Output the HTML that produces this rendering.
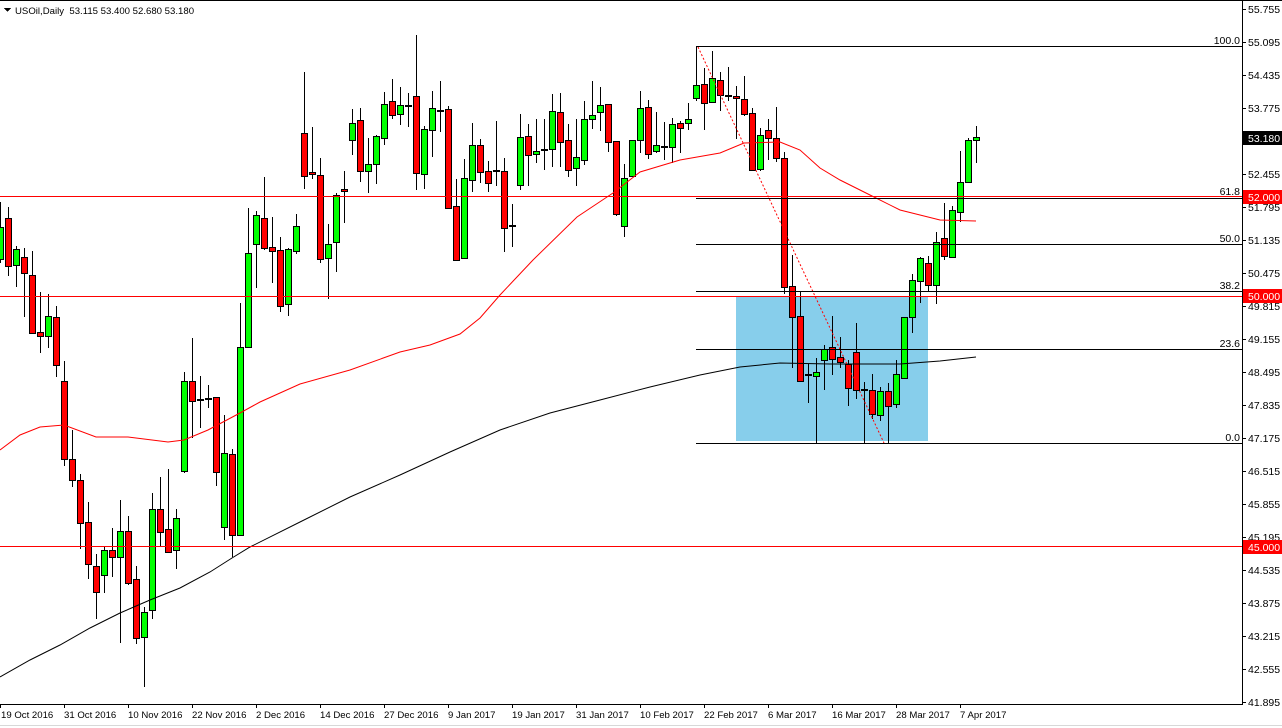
<!DOCTYPE html>
<html><head><meta charset="utf-8"><style>
html,body{margin:0;padding:0;background:#fff;}
svg{display:block;font-family:"Liberation Sans",Tahoma,sans-serif;font-size:10.5px;}
.g{fill:#00ff00;stroke:#000;stroke-width:1}
.r{fill:#ff0000;stroke:#000;stroke-width:1}
.ax text{fill:#000}
.sm{font-size:9.6px}
</style></head><body>
<svg width="1282" height="728" viewBox="0 0 1282 728" shape-rendering="crispEdges">
<rect x="0" y="0" width="1282" height="728" fill="#fff"/>
<line x1="0" y1="0.5" x2="1282" y2="0.5" stroke="#000"/>
<rect x="736" y="296" width="192" height="145" fill="#87ceeb"/>
<path fill="none" stroke="#000" d="M0.5 202V263M8.5 207V276M16.5 246V287M24.5 248V317M32.5 251V334M40.5 292V353M48.5 294V348M56.5 306V377M64.5 361V466M72.5 430V487M80.5 474V549M88.5 502V579M96.5 554V619M104.5 547V593M112.5 528V577M120.5 500V643M128.5 516V585M136.5 566V644M144.5 607V687M152.5 493V619M160.5 477V546M168.5 469V553M176.5 509V569M184.5 372V473M192.5 338V438M200.5 376V428M208.5 385V408M216.5 397V486M224.5 415V540M232.5 449V557M240.5 303V535M248.5 208V347M256.5 211V288M264.5 177V250M272.5 217V283M280.5 237V312M288.5 248V316M296.5 214V254M304.5 72V189M312.5 127V179M320.5 158V263M328.5 224V299M336.5 193V272M344.5 171V223M352.5 109V155M360.5 108V182M368.5 138V193M376.5 135V184M384.5 92V145M392.5 79V119M400.5 87V125M408.5 93V127M416.5 35V190M424.5 126V189M432.5 91V157M440.5 81V132M448.5 106V209M456.5 179V261M464.5 159V259M472.5 123V192M480.5 139V183M488.5 161V192M496.5 121V186M504.5 158V252M512.5 204V247M520.5 114V190M528.5 124V186M536.5 119V163M544.5 119V170M552.5 94V167M560.5 93V167M568.5 124V177M576.5 119V186M584.5 101V165M592.5 81V129M600.5 87V131M608.5 104V152M616.5 141V216M624.5 164V237M632.5 140V176M640.5 91V153M648.5 100V159M656.5 112V153M664.5 122V160M672.5 118V163M680.5 121V153M688.5 103V130M696.5 47V101M704.5 68V130M712.5 51V103M720.5 72V111M728.5 67V101M736.5 86V139M744.5 76V116M752.5 108V170M760.5 128V171M768.5 119V160M776.5 107V162M784.5 152V294M792.5 255V368M800.5 292V382M808.5 364V403M816.5 358V443M824.5 345V390M832.5 316V375M840.5 337V368M848.5 360V406M856.5 323V399M864.5 382V443M872.5 374V419M880.5 387V421M888.5 383V443M896.5 360V408M904.5 317V378M912.5 274V333M920.5 257V303M928.5 256V291M936.5 232V304M944.5 203V260M952.5 206V258M960.5 151V222M968.5 138V183M976.5 126V163"/>
<g fill="#000">
<rect x="197" y="399" width="7" height="2"/><rect x="205" y="398" width="7" height="2"/>
<rect x="405" y="105" width="7" height="2"/><rect x="437" y="110" width="7" height="2"/>
<rect x="493" y="170" width="7" height="2"/><rect x="509" y="225" width="7" height="2"/>
<rect x="541" y="149" width="7" height="2"/><rect x="661" y="146" width="7" height="2"/>
<rect x="725" y="95" width="7" height="2"/><rect x="805" y="374" width="7" height="2"/>
<rect x="861" y="389" width="7" height="2"/>
</g>
<g>
<rect class="g" x="-2.5" y="227.5" width="6" height="32"/>
<rect class="r" x="5.5" y="218.5" width="6" height="48"/>
<rect class="g" x="13.5" y="249.5" width="6" height="16"/>
<rect class="r" x="21.5" y="257.5" width="6" height="16"/>
<rect class="r" x="29.5" y="275.5" width="6" height="58"/>
<rect class="r" x="37.5" y="332.5" width="6" height="4"/>
<rect class="g" x="45.5" y="316.5" width="6" height="20"/>
<rect class="r" x="53.5" y="317.5" width="6" height="48"/>
<rect class="r" x="61.5" y="381.5" width="6" height="78"/>
<rect class="r" x="69.5" y="459.5" width="6" height="21"/>
<rect class="r" x="77.5" y="480.5" width="6" height="43"/>
<rect class="r" x="85.5" y="522.5" width="6" height="42"/>
<rect class="r" x="93.5" y="566.5" width="6" height="26"/>
<rect class="g" x="101.5" y="550.5" width="6" height="25"/>
<rect class="r" x="109.5" y="550.5" width="6" height="7"/>
<rect class="g" x="117.5" y="531.5" width="6" height="26"/>
<rect class="r" x="125.5" y="531.5" width="6" height="52"/>
<rect class="r" x="133.5" y="579.5" width="6" height="59"/>
<rect class="g" x="141.5" y="612.5" width="6" height="25"/>
<rect class="g" x="149.5" y="509.5" width="6" height="101"/>
<rect class="r" x="157.5" y="509.5" width="6" height="23"/>
<rect class="r" x="165.5" y="529.5" width="6" height="23"/>
<rect class="g" x="173.5" y="518.5" width="6" height="32"/>
<rect class="g" x="181.5" y="381.5" width="6" height="90"/>
<rect class="r" x="189.5" y="381.5" width="6" height="20"/>
<rect class="r" x="213.5" y="397.5" width="6" height="75"/>
<rect class="g" x="221.5" y="453.5" width="6" height="74"/>
<rect class="r" x="229.5" y="454.5" width="6" height="81"/>
<rect class="g" x="237.5" y="347.5" width="6" height="188"/>
<rect class="g" x="245.5" y="253.5" width="6" height="94"/>
<rect class="g" x="253.5" y="215.5" width="6" height="29"/>
<rect class="r" x="261.5" y="218.5" width="6" height="30"/>
<rect class="r" x="269.5" y="247.5" width="6" height="4"/>
<rect class="r" x="277.5" y="250.5" width="6" height="56"/>
<rect class="g" x="285.5" y="249.5" width="6" height="55"/>
<rect class="g" x="293.5" y="226.5" width="6" height="25"/>
<rect class="r" x="301.5" y="133.5" width="6" height="43"/>
<rect class="r" x="309.5" y="172.5" width="6" height="2"/>
<rect class="r" x="317.5" y="175.5" width="6" height="84"/>
<rect class="g" x="325.5" y="244.5" width="6" height="14"/>
<rect class="g" x="333.5" y="195.5" width="6" height="47"/>
<rect class="r" x="341.5" y="189.5" width="6" height="2"/>
<rect class="g" x="349.5" y="123.5" width="6" height="17"/>
<rect class="r" x="357.5" y="120.5" width="6" height="51"/>
<rect class="g" x="365.5" y="164.5" width="6" height="7"/>
<rect class="g" x="373.5" y="136.5" width="6" height="28"/>
<rect class="g" x="381.5" y="104.5" width="6" height="34"/>
<rect class="r" x="389.5" y="101.5" width="6" height="14"/>
<rect class="g" x="397.5" y="105.5" width="6" height="9"/>
<rect class="r" x="413.5" y="96.5" width="6" height="77"/>
<rect class="g" x="421.5" y="129.5" width="6" height="45"/>
<rect class="g" x="429.5" y="108.5" width="6" height="22"/>
<rect class="r" x="445.5" y="109.5" width="6" height="99"/>
<rect class="r" x="453.5" y="206.5" width="6" height="54"/>
<rect class="g" x="461.5" y="178.5" width="6" height="80"/>
<rect class="g" x="469.5" y="145.5" width="6" height="35"/>
<rect class="r" x="477.5" y="145.5" width="6" height="27"/>
<rect class="r" x="485.5" y="171.5" width="6" height="12"/>
<rect class="r" x="501.5" y="171.5" width="6" height="57"/>
<rect class="g" x="517.5" y="137.5" width="6" height="48"/>
<rect class="r" x="525.5" y="136.5" width="6" height="19"/>
<rect class="g" x="533.5" y="151.5" width="6" height="3"/>
<rect class="g" x="549.5" y="111.5" width="6" height="38"/>
<rect class="r" x="557.5" y="112.5" width="6" height="30"/>
<rect class="r" x="565.5" y="140.5" width="6" height="30"/>
<rect class="g" x="573.5" y="157.5" width="6" height="11"/>
<rect class="g" x="581.5" y="119.5" width="6" height="41"/>
<rect class="g" x="589.5" y="115.5" width="6" height="4"/>
<rect class="g" x="597.5" y="105.5" width="6" height="7"/>
<rect class="r" x="605.5" y="104.5" width="6" height="38"/>
<rect class="r" x="613.5" y="141.5" width="6" height="73"/>
<rect class="g" x="621.5" y="178.5" width="6" height="48"/>
<rect class="g" x="629.5" y="140.5" width="6" height="36"/>
<rect class="g" x="637.5" y="108.5" width="6" height="32"/>
<rect class="r" x="645.5" y="107.5" width="6" height="47"/>
<rect class="g" x="653.5" y="145.5" width="6" height="6"/>
<rect class="g" x="669.5" y="124.5" width="6" height="23"/>
<rect class="r" x="677.5" y="123.5" width="6" height="5"/>
<rect class="g" x="685.5" y="119.5" width="6" height="4"/>
<rect class="g" x="693.5" y="85.5" width="6" height="13"/>
<rect class="r" x="701.5" y="84.5" width="6" height="19"/>
<rect class="g" x="709.5" y="78.5" width="6" height="24"/>
<rect class="r" x="717.5" y="80.5" width="6" height="15"/>
<rect class="r" x="733.5" y="96.5" width="6" height="2"/>
<rect class="r" x="741.5" y="99.5" width="6" height="15"/>
<rect class="r" x="749.5" y="113.5" width="6" height="57"/>
<rect class="g" x="757.5" y="135.5" width="6" height="34"/>
<rect class="r" x="765.5" y="130.5" width="6" height="8"/>
<rect class="r" x="773.5" y="138.5" width="6" height="20"/>
<rect class="r" x="781.5" y="158.5" width="6" height="129"/>
<rect class="r" x="789.5" y="286.5" width="6" height="31"/>
<rect class="r" x="797.5" y="316.5" width="6" height="65"/>
<rect class="g" x="813.5" y="372.5" width="6" height="4"/>
<rect class="g" x="821.5" y="349.5" width="6" height="11"/>
<rect class="r" x="829.5" y="347.5" width="6" height="12"/>
<rect class="r" x="837.5" y="357.5" width="6" height="5"/>
<rect class="r" x="845.5" y="364.5" width="6" height="24"/>
<rect class="r" x="853.5" y="352.5" width="6" height="38"/>
<rect class="r" x="869.5" y="390.5" width="6" height="24"/>
<rect class="g" x="877.5" y="391.5" width="6" height="24"/>
<rect class="r" x="885.5" y="391.5" width="6" height="15"/>
<rect class="g" x="893.5" y="374.5" width="6" height="30"/>
<rect class="g" x="901.5" y="317.5" width="6" height="61"/>
<rect class="g" x="909.5" y="280.5" width="6" height="37"/>
<rect class="g" x="917.5" y="258.5" width="6" height="23"/>
<rect class="r" x="925.5" y="263.5" width="6" height="22"/>
<rect class="g" x="933.5" y="242.5" width="6" height="43"/>
<rect class="r" x="941.5" y="238.5" width="6" height="18"/>
<rect class="g" x="949.5" y="210.5" width="6" height="47"/>
<rect class="g" x="957.5" y="182.5" width="6" height="30"/>
<rect class="g" x="965.5" y="140.5" width="6" height="42"/>
<rect class="g" x="973.5" y="137.5" width="6" height="3"/>
</g>
<g fill="none" shape-rendering="auto">
<polyline stroke="#000" stroke-width="1" points="0,677 30,660 60,645 90,628 120,613 150,600 180,588 210,572 232,558 250,547 300,522 350,497 400,475 450,452 500,430 550,413 600,400 650,387 700,375 740,367 780,363 830,364 900,364 940,361 976,357"/>
<polyline stroke="#ff0000" stroke-width="1" points="0,450 20,435 40,427 64,425 96,437 128,437 168,442 184,440 208,430 240,413 260,402 300,384 350,370 400,352 430,345 460,334 480,318 500,295 533,260 577,217 613,193 640,172 680,160 720,153 744,143 780,142 800,150 820,168 840,180 870,195 900,210 940,220 976,221"/>
<line x1="698" y1="47" x2="884" y2="443" stroke="#ff0000" stroke-dasharray="2 2"/>
</g>
<g>
<line x1="696" y1="46.5" x2="1242" y2="46.5" stroke="#000"/>
<line x1="696" y1="198.5" x2="1242" y2="198.5" stroke="#000"/>
<line x1="696" y1="244.5" x2="1242" y2="244.5" stroke="#000"/>
<line x1="696" y1="291.5" x2="1242" y2="291.5" stroke="#000"/>
<line x1="696" y1="349.5" x2="1242" y2="349.5" stroke="#000"/>
<line x1="696" y1="443.5" x2="1242" y2="443.5" stroke="#000"/>
<line x1="0" y1="196.5" x2="1242" y2="196.5" stroke="#ff0000"/>
<line x1="0" y1="296.5" x2="1242" y2="296.5" stroke="#ff0000"/>
<line x1="0" y1="546.5" x2="1242" y2="546.5" stroke="#ff0000"/>
</g>
<g text-anchor="end" fill="#000">
<text x="1240" y="44">100.0</text>
<text x="1240" y="195">61.8</text>
<text x="1240" y="242">50.0</text>
<text x="1240" y="289">38.2</text>
<text x="1240" y="347">23.6</text>
<text x="1240" y="441">0.0</text>
</g>
<path d="M4 8h7l-3.5 4z" fill="#000"/>
<text class="sm" x="15" y="14" fill="#000">USOil,Daily&#160;&#160;53.115 53.400 52.680 53.180</text>
<line x1="1242.5" y1="0" x2="1242.5" y2="705" stroke="#000"/>
<line x1="0" y1="704.5" x2="1243" y2="704.5" stroke="#000"/>
<line x1="0" y1="725.5" x2="1282" y2="725.5" stroke="#d8d8d8"/>
<path stroke="#000" d="M1242 9.5h4M1242 42.5h4M1242 75.5h4M1242 108.5h4M1242 141.5h4M1242 174.5h4M1242 207.5h4M1242 240.5h4M1242 273.5h4M1242 306.5h4M1242 339.5h4M1242 372.5h4M1242 405.5h4M1242 438.5h4M1242 471.5h4M1242 504.5h4M1242 537.5h4M1242 570.5h4M1242 603.5h4M1242 636.5h4M1242 669.5h4M1242 702.5h4"/>
<g class="ax">
<text x="1248" y="13">55.755</text><text x="1248" y="46">55.095</text><text x="1248" y="79">54.435</text>
<text x="1248" y="112">53.775</text><text x="1248" y="178">52.455</text><text x="1248" y="211">51.795</text>
<text x="1248" y="244">51.135</text><text x="1248" y="277">50.475</text><text x="1248" y="310">49.815</text>
<text x="1248" y="343">49.155</text><text x="1248" y="376">48.495</text><text x="1248" y="409">47.835</text>
<text x="1248" y="442">47.175</text><text x="1248" y="475">46.515</text><text x="1248" y="508">45.855</text>
<text x="1248" y="541">45.195</text><text x="1248" y="574">44.535</text><text x="1248" y="607">43.875</text>
<text x="1248" y="640">43.215</text><text x="1248" y="673">42.555</text><text x="1248" y="706">41.895</text>
</g>
<rect x="1243" y="131" width="39" height="14" fill="#000"/>
<text x="1248" y="142" fill="#fff">53.180</text>
<rect x="1243" y="190" width="39" height="14" fill="#ff0000"/>
<text x="1248" y="201" fill="#fff">52.000</text>
<rect x="1243" y="289" width="39" height="14" fill="#ff0000"/>
<text x="1248" y="300" fill="#fff">50.000</text>
<rect x="1243" y="540" width="39" height="14" fill="#ff0000"/>
<text x="1248" y="551" fill="#fff">45.000</text>
<path stroke="#000" d="M0.5 704v4M64.5 704v4M128.5 704v4M192.5 704v4M256.5 704v4M320.5 704v4M384.5 704v4M448.5 704v4M512.5 704v4M576.5 704v4M640.5 704v4M704.5 704v4M768.5 704v4M832.5 704v4M896.5 704v4M960.5 704v4"/>
<g fill="#000" class="sm">
<text x="1" y="718">19 Oct 2016</text><text x="64" y="718">31 Oct 2016</text><text x="128" y="718">10 Nov 2016</text>
<text x="192" y="718">22 Nov 2016</text><text x="256" y="718">2 Dec 2016</text><text x="320" y="718">14 Dec 2016</text>
<text x="384" y="718">27 Dec 2016</text><text x="448" y="718">9 Jan 2017</text><text x="512" y="718">19 Jan 2017</text>
<text x="576" y="718">31 Jan 2017</text><text x="640" y="718">10 Feb 2017</text><text x="704" y="718">22 Feb 2017</text>
<text x="768" y="718">6 Mar 2017</text><text x="832" y="718">16 Mar 2017</text><text x="896" y="718">28 Mar 2017</text>
<text x="960" y="718">7 Apr 2017</text>
</g>
</svg>
</body></html>
